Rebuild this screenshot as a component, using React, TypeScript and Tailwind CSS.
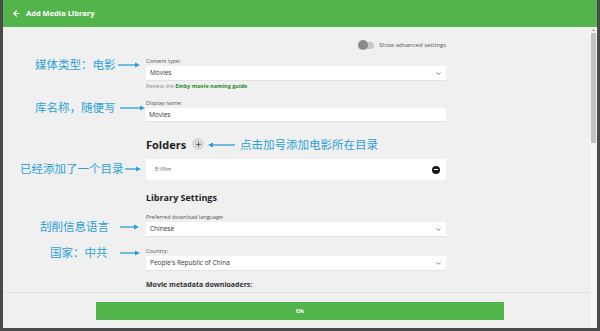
import { ArrowLeft, ChevronDown, Plus } from "lucide-react";

const BLUE = "#2aa0d8";

function Arrow({ dir = "right", w = 22 }: { dir?: "right" | "left"; w?: number }) {
  return (
    <svg width={w} height="6" viewBox={`0 0 ${w} 6`} className="block">
      {dir === "right" ? (
        <>
          <line x1="0" y1="3" x2={w - 4} y2="3" stroke={BLUE} strokeWidth="1.3" />
          <polygon points={`${w - 5},0.5 ${w},3 ${w - 5},5.5`} fill={BLUE} />
        </>
      ) : (
        <>
          <line x1="4" y1="3" x2={w} y2="3" stroke={BLUE} strokeWidth="1.3" />
          <polygon points="5,0.5 0,3 5,5.5" fill={BLUE} />
        </>
      )}
    </svg>
  );
}

function Note({ text, x, y, ax, aw }: { text: string; x: number; y: number; ax: number; aw: number }) {
  return (
    <>
      <div
        className="absolute text-[11.5px] leading-none text-[#2aa0d8] whitespace-nowrap"
        style={{ left: x, top: y - 6, fontFamily: '"Noto Sans CJK SC", sans-serif' }}
      >
        {text}
      </div>
      <div className="absolute" style={{ left: ax, top: y - 3 }}>
        <Arrow w={aw} />
      </div>
    </>
  );
}

function Select({ value }: { value: string }) {
  return (
    <div className="h-[14px] bg-white flex items-center justify-between pl-[4px] pr-[4px] shadow-[0_1px_0_#e2e2e2]">
      <span className="text-[6.5px] text-[#333]">{value}</span>
      <ChevronDown className="w-[7px] h-[7px] text-[#555]" strokeWidth={2.5} />
    </div>
  );
}

export default function App() {
  return (
    <div
      className="w-[600px] h-[331px] bg-[#4a4a4a] flex flex-col overflow-hidden relative"
      style={{ fontFamily: '"Open Sans", "Liberation Sans", sans-serif' }}
    >
      <div className="flex flex-1 min-h-0 pb-[3px]">
        <div className="w-[3px] bg-[#4a4a4a]" />
        <div className="flex-1 flex flex-col bg-[#f0f0f0] min-w-0">
          {/* header */}
          <div className="h-[27px] bg-[#52b54b] flex items-center pl-[9px] gap-[5px]">
            <ArrowLeft className="w-[9px] h-[9px] text-white" strokeWidth={3} />
            <span className="text-white font-bold text-[7.5px]">Add Media Library</span>
          </div>
          <div className="flex flex-1 min-h-0">
            {/* scroll content */}
            <div className="flex-1 min-w-0 flex flex-col">
              <div className="flex-1 pl-[143px] overflow-hidden">
                <div className="w-[300px]">
                  <div className="flex justify-end items-center gap-[5px] pt-[14px] h-[22px]">
                    <div className="w-[16px] h-[7px] rounded-full bg-[#c8c8c8] relative">
                      <div className="absolute left-0 top-[-1.5px] w-[10px] h-[10px] rounded-full bg-[#8a8a8a]" />
                    </div>
                    <span className="text-[6px] text-[#555]">Show advanced settings</span>
                  </div>

                  <div className="mt-[8px] text-[5.5px] text-[#555] h-[8px] leading-[8px]">Content type:</div>
                  <div className="mt-[1px]">
                    <Select value="Movies" />
                  </div>
                  <div className="mt-[3px] text-[5.5px] text-[#888] h-[7px] leading-[7px]">
                    Review the <span className="text-[#2c8a2a] font-bold">Emby movie naming guide</span>
                  </div>

                  <div className="mt-[9px] text-[5.5px] text-[#555] h-[8px] leading-[8px]">Display name:</div>
                  <div className="mt-[1px] h-[13px] bg-white flex items-center pl-[3px] shadow-[0_1px_0_#e2e2e2]">
                    <span className="text-[6.5px] text-[#333]">Movies</span>
                  </div>

                  <div className="mt-[16px] flex items-center gap-[6px] h-[14px]">
                    <span className="text-[11px] font-bold text-[#222] leading-none">Folders</span>
                    <div className="w-[12px] h-[12px] rounded-full bg-[#d9d9d9] flex items-center justify-center">
                      <Plus className="w-[7px] h-[7px] text-[#444]" strokeWidth={2.5} />
                    </div>
                  </div>

                  <div className="mt-[8px] h-[21px] bg-white flex items-center justify-between pl-[9px] pr-[6px]">
                    <span className="text-[5.5px] text-[#666]">E:\film</span>
                    <div className="w-[8px] h-[8px] rounded-full bg-[#1a1a1a] flex items-center justify-center">
                      <div className="w-[4px] h-[1.2px] bg-white" />
                    </div>
                  </div>

                  <div className="mt-[12px] text-[9px] font-bold text-[#222] h-[12px] leading-[12px]">Library Settings</div>

                  <div className="mt-[9px] text-[5.5px] text-[#555] h-[8px] leading-[8px]">Preferred download language:</div>
                  <div className="mt-[1px]">
                    <Select value="Chinese" />
                  </div>

                  <div className="mt-[11px] text-[5.5px] text-[#555] h-[8px] leading-[8px]">Country:</div>
                  <div className="mt-[1px]">
                    <Select value="People's Republic of China" />
                  </div>

                  <div className="mt-[10px] text-[7px] font-bold text-[#333] h-[9px] leading-[9px]">Movie metadata downloaders:</div>
                  <div className="mt-[3px] h-[2px] bg-white" />
                </div>
              </div>
              {/* footer */}
              <div className="h-[36px] border-t border-[#e0e0e0] bg-[#f0f0f0] flex pt-[9px] pl-[93px]">
                <div className="w-[408px] h-[18px] bg-[#52b54b] flex items-center justify-center">
                  <span className="text-white font-bold text-[6px]">Ok</span>
                </div>
              </div>
            </div>
            {/* scrollbar */}
            <div className="w-[7px] bg-[#f4f4f4] flex flex-col items-center">
              <div className="h-[5px] text-[4px] leading-[5px] text-[#888]">▲</div>
              <div className="w-[5px] h-[110px] bg-[#c1c1c1] mt-[1px]" />
            </div>
          </div>
        </div>
        <div className="w-[3px] bg-[#4a4a4a]" />
      </div>

      {/* annotations */}
      <Note text="媒体类型：电影" x={35} y={65} ax={118} aw={22} />
      <Note text="库名称，随便写" x={35} y={108} ax={120} aw={25} />
      <Note text="已经添加了一个目录" x={20} y={169} ax={125} aw={16} />
      <Note text="刮削信息语言" x={40} y={227} ax={120} aw={19} />
      <Note text="国家：中共" x={50} y={253} ax={120} aw={20} />
      <div
        className="absolute text-[11.5px] leading-none text-[#2aa0d8] whitespace-nowrap"
        style={{ left: 240, top: 139, fontFamily: '"Noto Sans CJK SC", sans-serif' }}
      >
        点击加号添加电影所在目录
      </div>
      <div className="absolute" style={{ left: 208, top: 142 }}>
        <Arrow dir="left" w={27} />
      </div>
    </div>
  );
}
